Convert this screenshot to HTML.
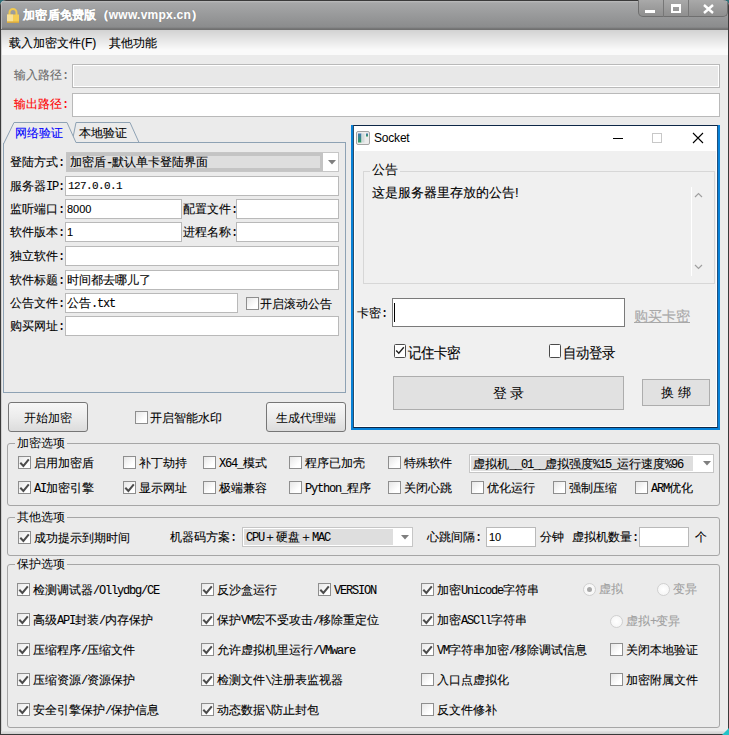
<!DOCTYPE html><html><head><meta charset="utf-8"><style>
*{box-sizing:border-box}
html,body{margin:0;padding:0;width:729px;height:735px;overflow:hidden;background:#2f6f78}
body{position:relative;font-family:"Liberation Sans",sans-serif;font-size:12px;color:#000}
.t{position:absolute;white-space:nowrap;line-height:14px;font-size:12px}
.m{font-family:"Liberation Mono",monospace;font-size:11px;letter-spacing:-0.6px}
.a{font-family:"Liberation Mono",monospace;font-size:12px;letter-spacing:-1.2px}
.t{-webkit-text-stroke-width:0.1px}
.cb{position:absolute;width:13px;height:13px;border:1px solid #8e8e8e;background:linear-gradient(135deg,#e6e6e6,#fff 70%)}
.inp{position:absolute;border:1px solid #b9b9b9;background:#fff}
.grp{position:absolute;border:1px solid #a6a6a6;border-radius:3px}
.gl{position:absolute;background:#ebebeb;padding:0 2px;line-height:14px;font-size:12px;white-space:nowrap}
.btn{position:absolute;border:1px solid #767676;border-radius:3px;background:linear-gradient(#f7f7f7,#ececec 50%,#dcdcdc);text-align:center;font-size:12px}
</style></head><body>
<div id="win" style="position:absolute;left:0;top:0;width:729px;height:735px;border-radius:6px 6px 0 0;overflow:hidden;background:#ebebeb">

<div style="position:absolute;left:0;top:0;width:729px;height:30px;background:linear-gradient(#3a3a3a 0,#3a3a3a 1px,#bdbdbd 1px,#a6a7a8 3px,#8b8c8d 27px,#707070 29px)"></div>
<div style="position:absolute;left:0;top:30px;width:729px;height:25px;background:linear-gradient(#d2d2d2,#f0f0f0 60%,#fafafa 80%,#fafafa)"></div>
<div style="position:absolute;left:0;top:0;width:1px;height:735px;background:#3a3a3a"></div>
<div style="position:absolute;left:1px;top:30px;width:1px;height:701px;background:#d0d0d0"></div>
<div style="position:absolute;left:1px;top:2px;width:1px;height:27px;background:#b4b4b4"></div>
<div style="position:absolute;left:728px;top:0;width:1px;height:735px;background:#3a3a3a"></div>
<div style="position:absolute;left:1px;top:731px;width:727px;height:3px;background:linear-gradient(#e4e4e4,#cfcfcf)"></div>
<div style="position:absolute;left:0;top:734px;width:729px;height:1px;background:#3a3a3a"></div>
<svg style="position:absolute;left:722px;top:728px" width="7" height="7"><path d="M7 0 V7 H0Z" fill="#23c3c8"/></svg>
<svg style="position:absolute;left:6px;top:8px" width="14" height="15" viewBox="0 0 14 15">
<path d="M3.5 7 V4.5 A3.5 3.5 0 0 1 10.5 4.5 V7" stroke="#f0c850" stroke-width="2" fill="none"/>
<rect x="1" y="6.5" width="12" height="8" fill="#f5cd55"/><rect x="1" y="6.5" width="6" height="7" fill="#f6e09a"/><rect x="1" y="13.5" width="12" height="1.3" fill="#dca93a"/></svg>
<div class="t " style="left:23px;top:8px;letter-spacing:0.25px;color:#fff;font-size:12px;font-weight:bold;text-shadow:0 0 1px #777;line-height:14px">加密盾免费版（www.vmpx.cn）</div>
<div style="position:absolute;left:638px;top:0;width:90px;height:17px;border:1px solid #6f6f6f;border-top:none;border-radius:0 0 5px 5px;background:linear-gradient(#a9a9a9,#8f8f8f)"></div>
<div style="position:absolute;left:663px;top:0;width:1px;height:17px;background:#777"></div>
<div style="position:absolute;left:688px;top:0;width:1px;height:17px;background:#777"></div>
<div style="position:absolute;left:645px;top:10px;width:10px;height:3px;background:#fff"></div>
<div style="position:absolute;left:671px;top:4px;width:10px;height:9px;border:2px solid #fff;border-top-width:3px"></div>
<svg style="position:absolute;left:703px;top:4px" width="11" height="10"><path d="M1 1 L10 9 M10 1 L1 9" stroke="#fff" stroke-width="2.4"/></svg>
<div class="t " style="left:9px;top:36px;">载入加密文件(F)</div>
<div class="t " style="left:109px;top:36px;">其他功能</div>
<div class="t " style="left:14px;top:68px;color:#6b6b6b">输入路径<span class="a">:</span></div>
<div class="inp" style="left:72px;top:64px;width:648px;height:24px;background:#e8e8e8;box-shadow:inset 0 0 0 1px #fff"></div>
<style>#in1{}</style>
<div class="t " style="left:14px;top:97px;color:#f00">输出路径<span class="a">:</span></div>
<div class="inp" style="left:72px;top:93px;width:648px;height:24px"></div>
<svg style="position:absolute;left:0;top:118px" width="350" height="30">
<polygon points="72,24.5 76,4.5 130,4.5 139,24.5" fill="#ebebeb" stroke="#8ea2b4" stroke-width="1"/>
<polygon points="3.5,26 14,4.5 67,4.5 76,24.5 76,26" fill="#ebebeb" stroke="none"/>
<polyline points="3.5,26 14,4.5 67,4.5 76,24.5" fill="none" stroke="#8ea2b4" stroke-width="1"/>
</svg>
<div style="position:absolute;left:3px;top:143px;width:343px;height:250px;border:1px solid #8ea2b4;border-top:none"></div>
<div style="position:absolute;left:76px;top:142px;width:270px;height:1px;background:#8ea2b4"></div>
<div class="t " style="left:15px;top:126px;color:#0000ff">网络验证</div>
<div class="t " style="left:79px;top:126px;">本地验证</div>
<div class="t " style="left:10px;top:155px;">登陆方式<span class="a">:</span></div>
<div class="t " style="left:10px;top:179px;">服务器<span class="a">IP:</span></div>
<div class="t " style="left:10px;top:202px;">监听端口<span class="a">:</span></div>
<div class="t " style="left:10px;top:225px;">软件版本<span class="a">:</span></div>
<div class="t " style="left:10px;top:249px;">独立软件<span class="a">:</span></div>
<div class="t " style="left:10px;top:273px;">软件标题<span class="a">:</span></div>
<div class="t " style="left:10px;top:296px;">公告文件<span class="a">:</span></div>
<div class="t " style="left:10px;top:319px;">购买网址<span class="a">:</span></div>
<div style="position:absolute;left:66px;top:152px;width:273px;height:20px;border:1px solid #c6c6c6;background:#fff"></div>
<div style="position:absolute;left:67px;top:153px;width:256px;height:18px;border:3px solid #c4c4c4;background:#dedede"></div>
<svg style="position:absolute;left:328px;top:160px" width="8" height="5"><path d="M0 0 H8 L4 4.5Z" fill="#7f7f7f"/></svg>
<div class="t " style="left:70px;top:155px;">加密盾<span class="a">-</span>默认单卡登陆界面</div>
<div class="inp" style="left:65px;top:176px;width:274px;height:20px"></div>
<div class="t m" style="left:68px;top:179px;font-size:11px;letter-spacing:-0.6px">127.0.0.1</div>
<div class="inp" style="left:65px;top:199px;width:117px;height:20px"></div>
<div class="t " style="left:67px;top:202px;font-size:11px">8000</div>
<div class="t " style="left:183px;top:202px;">配置文件<span class="a">:</span></div>
<div class="inp" style="left:236px;top:199px;width:103px;height:20px"></div>
<div class="inp" style="left:65px;top:222px;width:117px;height:20px"></div>
<div class="t " style="left:67px;top:225px;font-size:11px">1</div>
<div class="t " style="left:183px;top:225px;">进程名称<span class="a">:</span></div>
<div class="inp" style="left:236px;top:222px;width:103px;height:20px"></div>
<div class="inp" style="left:65px;top:246px;width:274px;height:20px"></div>
<div class="inp" style="left:65px;top:270px;width:274px;height:20px"></div>
<div class="t " style="left:67px;top:273px;">时间都去哪儿了</div>
<div class="inp" style="left:65px;top:293px;width:173px;height:20px"></div>
<div class="t " style="left:67px;top:296px;">公告<span class="a">.txt</span></div>
<div class="cb" style="left:246px;top:297px"></div>
<div class="t " style="left:260px;top:297px;font-size:12px;color:#000">开启滚动公告</div>
<div class="inp" style="left:65px;top:316px;width:274px;height:20px"></div>
<div class="btn" style="left:8px;top:402px;width:80px;height:30px;line-height:30px">开始加密</div>
<div class="cb" style="left:135px;top:411px"></div>
<div class="t " style="left:150px;top:411px;font-size:12px;color:#000">开启智能水印</div>
<div class="btn" style="left:266px;top:402px;width:80px;height:30px;line-height:30px">生成代理端</div>
<div class="grp" style="left:7px;top:443px;width:713px;height:63px"></div>
<div class="gl" style="left:15px;top:436px">加密选项</div>
<div class="grp" style="left:7px;top:517px;width:713px;height:39px"></div>
<div class="gl" style="left:15px;top:510px">其他选项</div>
<div class="grp" style="left:7px;top:564px;width:713px;height:164px"></div>
<div class="gl" style="left:15px;top:557px">保护选项</div>
<div class="cb" style="left:18px;top:456px"><svg width="13" height="13" style="position:absolute;left:0;top:0"><path d="M1.3 5.7 L4.4 9.0 L9.8 2.3" stroke="#4c4c4c" stroke-width="2" fill="none"/></svg></div>
<div class="t " style="left:34px;top:456px;font-size:12px;color:#000">启用加密盾</div>
<div class="cb" style="left:123px;top:456px"></div>
<div class="t " style="left:139px;top:456px;font-size:12px;color:#000">补丁劫持</div>
<div class="cb" style="left:203px;top:456px"></div>
<div class="t " style="left:219px;top:456px;font-size:12px;color:#000"><span class="a">X64_</span>模式</div>
<div class="cb" style="left:289px;top:456px"></div>
<div class="t " style="left:305px;top:456px;font-size:12px;color:#000">程序已加壳</div>
<div class="cb" style="left:388px;top:456px"></div>
<div class="t " style="left:404px;top:456px;font-size:12px;color:#000">特殊软件</div>
<div style="position:absolute;left:469px;top:454px;width:245px;height:19px;border:1px solid #c6c6c6;background:#fff"></div>
<div style="position:absolute;left:471px;top:456px;width:222px;height:15px;background:#dedede"></div>
<svg style="position:absolute;left:703px;top:461px" width="8" height="5"><path d="M0 0 H8 L4 4.5Z" fill="#7f7f7f"/></svg>
<div class="t " style="left:473px;top:457px;">虚拟机<span class="a">__01__</span>虚拟强度<span class="a">%15_</span>运行速度<span class="a">%96</span></div>
<div class="cb" style="left:18px;top:481px"><svg width="13" height="13" style="position:absolute;left:0;top:0"><path d="M1.3 5.7 L4.4 9.0 L9.8 2.3" stroke="#4c4c4c" stroke-width="2" fill="none"/></svg></div>
<div class="t " style="left:34px;top:481px;font-size:12px;color:#000"><span class="a">AI</span>加密引擎</div>
<div class="cb" style="left:123px;top:481px"><svg width="13" height="13" style="position:absolute;left:0;top:0"><path d="M1.3 5.7 L4.4 9.0 L9.8 2.3" stroke="#4c4c4c" stroke-width="2" fill="none"/></svg></div>
<div class="t " style="left:139px;top:481px;font-size:12px;color:#000">显示网址</div>
<div class="cb" style="left:203px;top:481px"></div>
<div class="t " style="left:219px;top:481px;font-size:12px;color:#000">极端兼容</div>
<div class="cb" style="left:289px;top:481px"></div>
<div class="t " style="left:305px;top:481px;font-size:12px;color:#000"><span class="a">Python_</span>程序</div>
<div class="cb" style="left:388px;top:481px"></div>
<div class="t " style="left:404px;top:481px;font-size:12px;color:#000">关闭心跳</div>
<div class="cb" style="left:471px;top:481px"></div>
<div class="t " style="left:487px;top:481px;font-size:12px;color:#000">优化运行</div>
<div class="cb" style="left:553px;top:481px"></div>
<div class="t " style="left:569px;top:481px;font-size:12px;color:#000">强制压缩</div>
<div class="cb" style="left:635px;top:481px"></div>
<div class="t " style="left:651px;top:481px;font-size:12px;color:#000"><span class="a">ARM</span>优化</div>
<div class="cb" style="left:18px;top:531px"><svg width="13" height="13" style="position:absolute;left:0;top:0"><path d="M1.3 5.7 L4.4 9.0 L9.8 2.3" stroke="#4c4c4c" stroke-width="2" fill="none"/></svg></div>
<div class="t " style="left:34px;top:531px;font-size:12px;color:#000">成功提示到期时间</div>
<div class="t " style="left:170px;top:530px;">机器码方案<span class="a">:</span></div>
<div style="position:absolute;left:242px;top:527px;width:171px;height:20px;border:1px solid #c6c6c6;background:#fff"></div>
<div style="position:absolute;left:244px;top:529px;width:149px;height:16px;background:#dedede"></div>
<svg style="position:absolute;left:401px;top:535px" width="8" height="5"><path d="M0 0 H8 L4 4.5Z" fill="#7f7f7f"/></svg>
<div class="t " style="left:246px;top:530px;"><span class="a">CPU</span>＋硬盘＋<span class="a">MAC</span></div>
<div class="t " style="left:427px;top:530px;">心跳间隔<span class="a">:</span></div>
<div class="inp" style="left:486px;top:527px;width:50px;height:20px"></div>
<div class="t " style="left:489px;top:530px;font-size:11px">10</div>
<div class="t " style="left:540px;top:530px;">分钟</div>
<div class="t " style="left:572px;top:530px;">虚拟机数量<span class="a">:</span></div>
<div class="inp" style="left:639px;top:527px;width:50px;height:20px"></div>
<div class="t " style="left:695px;top:530px;">个</div>
<div class="cb" style="left:17px;top:583px"><svg width="13" height="13" style="position:absolute;left:0;top:0"><path d="M1.3 5.7 L4.4 9.0 L9.8 2.3" stroke="#4c4c4c" stroke-width="2" fill="none"/></svg></div>
<div class="t " style="left:33px;top:583px;font-size:12px;color:#000">检测调试器<span class="a">/Ollydbg/CE</span></div>
<div class="cb" style="left:17px;top:613px"><svg width="13" height="13" style="position:absolute;left:0;top:0"><path d="M1.3 5.7 L4.4 9.0 L9.8 2.3" stroke="#4c4c4c" stroke-width="2" fill="none"/></svg></div>
<div class="t " style="left:33px;top:613px;font-size:12px;color:#000">高级<span class="a">API</span>封装<span class="a">/</span>内存保护</div>
<div class="cb" style="left:17px;top:643px"><svg width="13" height="13" style="position:absolute;left:0;top:0"><path d="M1.3 5.7 L4.4 9.0 L9.8 2.3" stroke="#4c4c4c" stroke-width="2" fill="none"/></svg></div>
<div class="t " style="left:33px;top:643px;font-size:12px;color:#000">压缩程序<span class="a">/</span>压缩文件</div>
<div class="cb" style="left:17px;top:673px"><svg width="13" height="13" style="position:absolute;left:0;top:0"><path d="M1.3 5.7 L4.4 9.0 L9.8 2.3" stroke="#4c4c4c" stroke-width="2" fill="none"/></svg></div>
<div class="t " style="left:33px;top:673px;font-size:12px;color:#000">压缩资源<span class="a">/</span>资源保护</div>
<div class="cb" style="left:17px;top:703px"><svg width="13" height="13" style="position:absolute;left:0;top:0"><path d="M1.3 5.7 L4.4 9.0 L9.8 2.3" stroke="#4c4c4c" stroke-width="2" fill="none"/></svg></div>
<div class="t " style="left:33px;top:703px;font-size:12px;color:#000">安全引擎保护<span class="a">/</span>保护信息</div>
<div class="cb" style="left:201px;top:583px"><svg width="13" height="13" style="position:absolute;left:0;top:0"><path d="M1.3 5.7 L4.4 9.0 L9.8 2.3" stroke="#4c4c4c" stroke-width="2" fill="none"/></svg></div>
<div class="t " style="left:217px;top:583px;font-size:12px;color:#000">反沙盒运行</div>
<div class="cb" style="left:201px;top:613px"><svg width="13" height="13" style="position:absolute;left:0;top:0"><path d="M1.3 5.7 L4.4 9.0 L9.8 2.3" stroke="#4c4c4c" stroke-width="2" fill="none"/></svg></div>
<div class="t " style="left:217px;top:613px;font-size:12px;color:#000">保护<span class="a">VM</span>宏不受攻击<span class="a">/</span>移除重定位</div>
<div class="cb" style="left:201px;top:643px"><svg width="13" height="13" style="position:absolute;left:0;top:0"><path d="M1.3 5.7 L4.4 9.0 L9.8 2.3" stroke="#4c4c4c" stroke-width="2" fill="none"/></svg></div>
<div class="t " style="left:217px;top:643px;font-size:12px;color:#000">允许虚拟机里运行<span class="a">/VMware</span></div>
<div class="cb" style="left:201px;top:673px"><svg width="13" height="13" style="position:absolute;left:0;top:0"><path d="M1.3 5.7 L4.4 9.0 L9.8 2.3" stroke="#4c4c4c" stroke-width="2" fill="none"/></svg></div>
<div class="t " style="left:217px;top:673px;font-size:12px;color:#000">检测文件<span class="a">\</span>注册表监视器</div>
<div class="cb" style="left:201px;top:703px"><svg width="13" height="13" style="position:absolute;left:0;top:0"><path d="M1.3 5.7 L4.4 9.0 L9.8 2.3" stroke="#4c4c4c" stroke-width="2" fill="none"/></svg></div>
<div class="t " style="left:217px;top:703px;font-size:12px;color:#000">动态数据<span class="a">\</span>防止封包</div>
<div class="cb" style="left:318px;top:583px"><svg width="13" height="13" style="position:absolute;left:0;top:0"><path d="M1.3 5.7 L4.4 9.0 L9.8 2.3" stroke="#4c4c4c" stroke-width="2" fill="none"/></svg></div>
<div class="t " style="left:334px;top:583px;font-size:12px;color:#000"><span class="a">VERSION</span></div>
<div class="cb" style="left:421px;top:583px"><svg width="13" height="13" style="position:absolute;left:0;top:0"><path d="M1.3 5.7 L4.4 9.0 L9.8 2.3" stroke="#4c4c4c" stroke-width="2" fill="none"/></svg></div>
<div class="t " style="left:437px;top:583px;font-size:12px;color:#000">加密<span class="a">Unicode</span>字符串</div>
<div class="cb" style="left:421px;top:613px"><svg width="13" height="13" style="position:absolute;left:0;top:0"><path d="M1.3 5.7 L4.4 9.0 L9.8 2.3" stroke="#4c4c4c" stroke-width="2" fill="none"/></svg></div>
<div class="t " style="left:437px;top:613px;font-size:12px;color:#000">加密<span class="a">ASCll</span>字符串</div>
<div class="cb" style="left:421px;top:643px"><svg width="13" height="13" style="position:absolute;left:0;top:0"><path d="M1.3 5.7 L4.4 9.0 L9.8 2.3" stroke="#4c4c4c" stroke-width="2" fill="none"/></svg></div>
<div class="t " style="left:437px;top:643px;font-size:12px;color:#000"><span class="a">VM</span>字符串加密<span class="a">/</span>移除调试信息</div>
<div class="cb" style="left:421px;top:673px"></div>
<div class="t " style="left:437px;top:673px;font-size:12px;color:#000">入口点虚拟化</div>
<div class="cb" style="left:421px;top:703px"></div>
<div class="t " style="left:437px;top:703px;font-size:12px;color:#000">反文件修补</div>
<div style="position:absolute;left:583px;top:583px;width:13px;height:13px;border-radius:50%;border:1px solid #d0d0d0;background:radial-gradient(#fff,#f2f2f2)"><div style="position:absolute;left:3px;top:3px;width:5px;height:5px;border-radius:50%;background:#a8a8a8"></div></div>
<div class="t " style="left:599px;top:582px;color:#a0a0a0">虚拟</div>
<div style="position:absolute;left:657px;top:583px;width:13px;height:13px;border-radius:50%;border:1px solid #d0d0d0;background:radial-gradient(#fff,#f2f2f2)"></div>
<div class="t " style="left:673px;top:582px;color:#a0a0a0">变异</div>
<div style="position:absolute;left:610px;top:615px;width:13px;height:13px;border-radius:50%;border:1px solid #d0d0d0;background:radial-gradient(#fff,#f2f2f2)"></div>
<div class="t " style="left:626px;top:614px;color:#a0a0a0">虚拟<span class="a">+</span>变异</div>
<div class="cb" style="left:610px;top:643px"></div>
<div class="t " style="left:626px;top:643px;font-size:12px;color:#000">关闭本地验证</div>
<div class="cb" style="left:610px;top:673px"></div>
<div class="t " style="left:626px;top:673px;font-size:12px;color:#000">加密附属文件</div>
<div style="position:absolute;left:351px;top:125px;width:369px;height:305px;background:#0882d8"></div>
<div style="position:absolute;left:353px;top:125px;width:365px;height:303px;background:#f0f0f0;border:1px solid #0e2747;border-left-color:#2a4d6c;border-right-color:#1d4f7e;box-shadow:inset 1px -1px 0 #fff,inset -1px 0 0 #fff"></div>
<div style="position:absolute;left:354px;top:126px;width:363px;height:25px;background:#fff"></div>
<svg style="position:absolute;left:356px;top:131px" width="14" height="14"><defs><linearGradient id="ig" x1="0" y1="0" x2="0" y2="1"><stop offset="0" stop-color="#3f74b0"/><stop offset="1" stop-color="#2f9a5c"/></linearGradient></defs><rect x="0.5" y="0.5" width="13" height="13" rx="1.5" fill="#ececec" stroke="#a4a4a4"/><rect x="2" y="2.5" width="3.5" height="9" fill="url(#ig)"/><rect x="5.5" y="2.5" width="3" height="9" fill="#d4dcdc"/><rect x="10" y="2.5" width="2" height="3" fill="url(#ig)"/></svg>
<div class="t " style="left:374px;top:131px;font-size:12px;color:#000;-webkit-text-stroke-width:0;letter-spacing:-0.2px">Socket</div>
<div style="position:absolute;left:613px;top:138px;width:10px;height:1px;background:#000"></div>
<div style="position:absolute;left:652px;top:133px;width:10px;height:10px;border:1px solid #c8c8c8"></div>
<svg style="position:absolute;left:692px;top:132px" width="12" height="12"><path d="M1 1 L11 11 M11 1 L1 11" stroke="#000" stroke-width="1.1"/></svg>
<div style="position:absolute;left:363px;top:171px;width:352px;height:113px;border:1px solid #d7d7d7"></div>
<div class="gl" style="left:370px;top:162px;background:#f0f0f0;font-size:13px;line-height:16px">公告</div>
<div class="t " style="left:372px;top:185px;font-size:13px;line-height:16px;-webkit-text-stroke-width:0.1px">这是服务器里存放的公告!</div>
<div style="position:absolute;left:691px;top:187px;width:1px;height:89px;background:#fff"></div>
<svg style="position:absolute;left:694px;top:192px" width="9" height="80"><path d="M1 5 L4.5 1.5 L8 5" stroke="#a0a0a0" stroke-width="1.2" fill="none"/><path d="M1 73 L4.5 76.5 L8 73" stroke="#a0a0a0" stroke-width="1.2" fill="none"/></svg>
<div class="t " style="left:357px;top:306px;font-size:12px">卡密<span class="a">:</span></div>
<div style="position:absolute;left:392px;top:298px;width:233px;height:29px;border:1px solid #7a7a7a;background:#fff"></div>
<div style="position:absolute;left:394px;top:303px;width:1px;height:19px;background:#000"></div>
<div class="t " style="left:634px;top:308px;font-size:14px;line-height:16px;color:#a8a8a8;text-decoration:underline">购买卡密</div>
<div style="position:absolute;left:394px;top:344px;width:12px;height:14px;border:1.5px solid #4a4a4a;border-radius:1.5px;background:#fff"><svg width="10" height="11" style="position:absolute;left:0;top:0"><path d="M1.2 5.5 L3.8 8.3 L8.8 2.2" stroke="#222" stroke-width="1.4" fill="none"/></svg></div>
<div class="t " style="left:408px;top:345px;font-size:13px;line-height:16px;transform:scaleY(1.12);transform-origin:0 0">记住卡密</div>
<div style="position:absolute;left:549px;top:344px;width:12px;height:14px;border:1.5px solid #4a4a4a;border-radius:1.5px;background:#fff"></div>
<div class="t " style="left:563px;top:345px;font-size:13px;line-height:16px;transform:scaleY(1.12);transform-origin:0 0">自动登录</div>
<div style="position:absolute;left:393px;top:376px;width:231px;height:34px;border:1px solid #adadad;background:#e1e1e1;text-align:center;line-height:32px;font-size:14px">登 录</div>
<div style="position:absolute;left:642px;top:379px;width:68px;height:27px;border:1px solid #adadad;background:#e1e1e1;text-align:center;line-height:25px;font-size:13px;font-weight:500;padding-top:0px">换 绑</div>
</div></body></html>
